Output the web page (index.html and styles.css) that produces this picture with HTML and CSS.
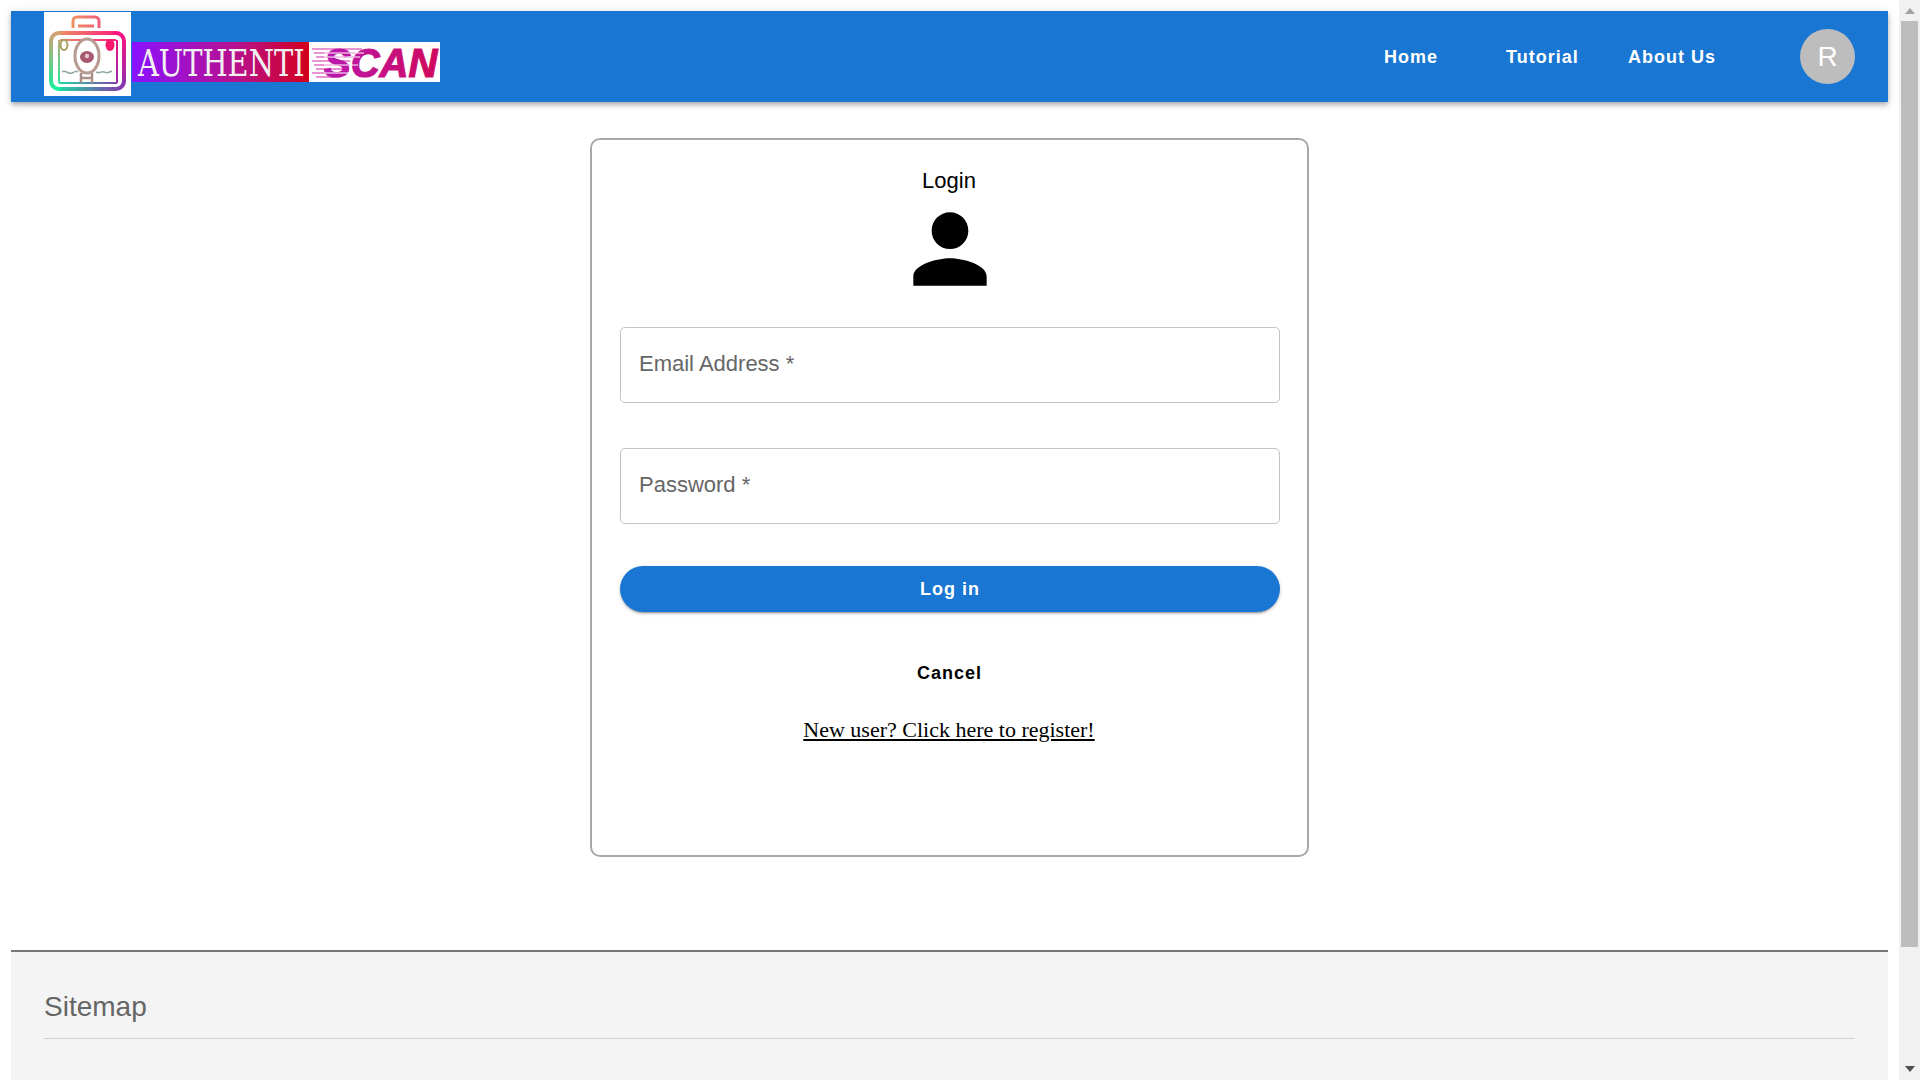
FILE: index.html
```html
<!DOCTYPE html>
<html lang="en">
<head>
  <meta charset="UTF-8">
  <meta name="viewport" content="width=device-width, initial-scale=1.0">
  <title>AuthentiScan</title>
  <link rel="stylesheet" href="styles.css">
</head>
<body>
  <div id="page">
    <header>
      <svg id="logo" width="396" height="84" viewBox="0 0 396 84">
        <defs>
          <linearGradient id="cam-top" gradientUnits="userSpaceOnUse" x1="6" y1="0" x2="81" y2="0">
            <stop offset="0" stop-color="#e8a060"/>
            <stop offset="1" stop-color="#ff1080"/>
          </linearGradient>
          <linearGradient id="cam-left" gradientUnits="userSpaceOnUse" x1="0" y1="20" x2="0" y2="78">
            <stop offset="0" stop-color="#d8a070"/>
            <stop offset="1" stop-color="#10f0a0"/>
          </linearGradient>
          <linearGradient id="cam-bottom" gradientUnits="userSpaceOnUse" x1="6" y1="0" x2="81" y2="0">
            <stop offset="0" stop-color="#10f0a0"/>
            <stop offset="1" stop-color="#8a30b0"/>
          </linearGradient>
          <linearGradient id="cam-right" gradientUnits="userSpaceOnUse" x1="0" y1="20" x2="0" y2="78">
            <stop offset="0" stop-color="#ff1080"/>
            <stop offset="1" stop-color="#8a30b0"/>
          </linearGradient>
          <linearGradient id="bag" x1="0" y1="0" x2="1" y2="0">
            <stop offset="0" stop-color="#f09060"/>
            <stop offset="1" stop-color="#f0607a"/>
          </linearGradient>
          <linearGradient id="auth" x1="0" y1="0" x2="1" y2="0">
            <stop offset="0" stop-color="#8a12ff"/>
            <stop offset="0.6" stop-color="#b8108a"/>
            <stop offset="1" stop-color="#d4001c"/>
          </linearGradient>
          <linearGradient id="scan" x1="0" y1="0" x2="1" y2="0">
            <stop offset="0" stop-color="#b818b0"/>
            <stop offset="1" stop-color="#d0085c"/>
          </linearGradient>
        </defs>
        <rect width="87" height="84" fill="#fff"/>
        <path d="M29 16v-7a4 4 0 0 1 4-4h18a4 4 0 0 1 4 4v7M34 14h16" fill="none" stroke="url(#bag)" stroke-width="3"/>

        <g fill="none" stroke-width="4" stroke-linecap="round">
          <path d="M15 21h57" stroke="url(#cam-top)"/>
          <path d="M72 21a8 8 0 0 1 8 8v40" stroke="url(#cam-right)"/>
          <path d="M80 69a8 8 0 0 1-8 8h-57" stroke="url(#cam-bottom)"/>
          <path d="M15 77a8 8 0 0 1-8-8v-40a8 8 0 0 1 8-8" stroke="url(#cam-left)"/>
        </g>
        <g fill="none" stroke-width="2">
          <path d="M16 28h56" stroke="url(#cam-top)"/>
          <path d="M73 28v43" stroke="url(#cam-right)"/>
          <path d="M73 71h-58" stroke="url(#cam-bottom)"/>
          <path d="M15 71v-43" stroke="url(#cam-left)"/>
        </g>

        <ellipse cx="43" cy="44" rx="12" ry="17" fill="#fff" stroke="#b89a90" stroke-width="3"/>
        <ellipse cx="43" cy="45" rx="7" ry="6" fill="#a85870"/>
        <circle cx="43" cy="44" r="2.2" fill="#e8c8c8"/>
        <ellipse cx="20" cy="33" rx="3.5" ry="5" fill="none" stroke="#a8a060" stroke-width="2"/>
        <ellipse cx="66" cy="33" rx="4.5" ry="6" fill="#f8186c"/>
        <path d="M18 60c4-3 6 3 10 1s4-2 6-1M52 60c4 2 5-1 8 0s4 1 8-1" fill="none" stroke="#90a8a0" stroke-width="1.5"/>
        <path d="M37 61v10M48 61v10M37 66h11" fill="none" stroke="#a89088" stroke-width="2.5"/>

        <rect x="88" y="30" width="177" height="40" fill="url(#auth)"/>
        <text class="logo-auth" transform="translate(94 64) scale(0.76 1)">AUTHENTI</text>

        <rect x="265" y="30" width="131" height="40" fill="#fff"/>
        <path class="logo-streak" d="M268 37h50M270 41h42M272 45h40M268 49h38M270 53h36M272 57h32M268 61h32M272 65h24"/>
        <text class="logo-scan" x="280" y="65">SCAN</text>
        <path class="logo-cut" d="M280 41h40M280 45h36M280 53h34M280 61h30"/>
      </svg>
      <nav>
        <a class="nav-link" href="#">Home</a>
        <a class="nav-link" href="#">Tutorial</a>
        <a class="nav-link" href="#">About Us</a>
      </nav>
      <div id="avatar">R</div>
    </header>

    <main>
      <form id="login-card">
        <h1>Login</h1>
        <svg id="person" width="110" height="110" viewBox="0 0 24 24">
          <path d="M12 12c2.21 0 4-1.79 4-4s-1.79-4-4-4-4 1.79-4 4 1.79 4 4 4zm0 2c-2.67 0-8 1.34-8 4v2h16v-2c0-2.66-5.33-4-8-4z"/>
        </svg>
        <input type="text" id="email" placeholder="Email Address *" autocomplete="off">
        <input type="password" id="password" placeholder="Password *" autocomplete="off">
        <button type="button" id="login-btn">Log in</button>
        <button type="button" id="cancel-btn">Cancel</button>
        <a id="register" href="#">New user? Click here to register!</a>
      </form>
    </main>

    <footer>
      <h2>Sitemap</h2>
      <hr>
    </footer>
  </div>

  <div id="scrollbar">
    <div class="arrow-up"></div>
    <div id="thumb"></div>
    <div class="arrow-down"></div>
  </div>
</body>
</html>
```

FILE: styles.css
```css
* {
  box-sizing: border-box;
  margin: 0;
  padding: 0;
}
body {
  display: flex;
  height: 100vh;
  overflow: hidden;
  background: white;
  font-family: "Liberation Sans", Arial, sans-serif;
}
#page {
  flex: 1;
  min-width: 0;
  padding: 11px 11px 0;
  display: flex;
  flex-direction: column;
}

/* header */
header {
  flex: none;
  height: 91px;
  padding: 0 33px;
  display: flex;
  align-items: center;
  justify-content: space-between;
  background: #1976d2;
  box-shadow: 0 2px 4px -1px rgba(0, 0, 0, 0.2), 0 4px 5px rgba(0, 0, 0, 0.14), 0 1px 10px rgba(0, 0, 0, 0.12);
}
#logo {
  margin-top: -5px;
}
.logo-auth {
  font-family: "DejaVu Serif", serif;
  font-size: 38px;
  fill: #f2f0f0;
}
.logo-scan {
  font-family: "Liberation Sans", sans-serif;
  font-weight: bold;
  font-style: italic;
  font-size: 40px;
  fill: url(#scan);
  stroke: url(#scan);
  stroke-width: 1.2;
}
.logo-streak {
  stroke: #e070c8;
  stroke-width: 1.5;
  fill: none;
}
.logo-cut {
  stroke: white;
  stroke-width: 1;
  fill: none;
}
nav {
  display: flex;
  margin-left: auto;
  padding-top: 2px;
}
.nav-link {
  width: 122px;
  color: white;
  font-size: 18px;
  font-weight: bold;
  letter-spacing: 1px;
  text-decoration: none;
}
#avatar {
  width: 55px;
  height: 55px;
  margin-left: 50px;
  border-radius: 50%;
  background: #bdbdbd;
  color: white;
  font-size: 28px;
  display: flex;
  align-items: center;
  justify-content: center;
}

/* login card */
main {
  flex: none;
  padding-top: 36px;
}
#login-card {
  width: 719px;
  height: 719px;
  margin: 0 auto;
  padding: 28px 27px 0 28px;
  border: 2px solid #a8a8a8;
  border-radius: 10px;
  display: flex;
  flex-direction: column;
  align-items: center;
}
h1 {
  margin-right: 2px;
  font-size: 22px;
  font-weight: normal;
  line-height: 26px;
  color: black;
}
#person {
  flex: none;
  fill: black;
}
input {
  flex: none;
  width: 100%;
  height: 76px;
  padding: 0 18px 2px;
  border: 1px solid #c4c4c4;
  border-radius: 5px;
  font-family: inherit;
  font-size: 22px;
  outline: none;
}
input::placeholder {
  color: #666;
  opacity: 1;
}
#email {
  margin-top: 23px;
}
#password {
  margin-top: 45px;
}
button {
  border: none;
  background: none;
  font-family: inherit;
  font-size: 18px;
  font-weight: bold;
  letter-spacing: 1px;
}
#login-btn {
  width: 100%;
  height: 46px;
  margin-top: 42px;
  border-radius: 23px;
  background: #1976d2;
  color: white;
  box-shadow: 0 3px 1px -2px rgba(0, 0, 0, 0.2), 0 2px 2px rgba(0, 0, 0, 0.14), 0 1px 5px rgba(0, 0, 0, 0.12);
}
#cancel-btn {
  height: 26px;
  margin: 48px 1px 0 0;
  color: black;
}
#register {
  margin: 31px 2px 0 0;
  color: black;
  font-family: "Liberation Serif", "Times New Roman", serif;
  font-size: 22px;
  line-height: 26px;
}

/* footer */
footer {
  flex: 1;
  margin-top: 93px;
  padding: 39px 33px 0;
  border-top: 2px solid #777;
  background: #f4f4f4;
}
h2 {
  font-size: 28px;
  font-weight: normal;
  line-height: 32px;
  color: #666;
}
hr {
  margin-top: 15px;
  border: none;
  border-top: 1px solid #d3d3d3;
}

/* scrollbar */
#scrollbar {
  flex: none;
  width: 21px;
  padding: 0 2px;
  background: #f1f1f1;
  display: flex;
  flex-direction: column;
  align-items: center;
}
#thumb {
  flex: none;
  width: 17px;
  height: 926px;
  margin-top: 7px;
  background: #bdbdbd;
}
.arrow-up {
  flex: none;
  width: 0;
  height: 0;
  margin-top: 8px;
  border-left: 5px solid transparent;
  border-right: 5px solid transparent;
  border-bottom: 6px solid #a3a3a3;
}
.arrow-down {
  flex: none;
  width: 0;
  height: 0;
  margin-top: 119px;
  border-left: 5px solid transparent;
  border-right: 5px solid transparent;
  border-top: 6px solid #505050;
}
```
